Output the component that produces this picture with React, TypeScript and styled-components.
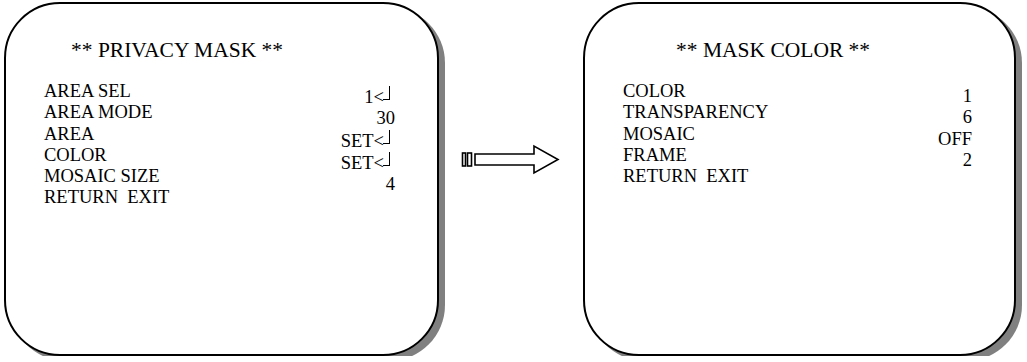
import styled, { createGlobalStyle } from 'styled-components';

const GlobalStyle = createGlobalStyle`
    body {
        margin: 0;
        background: #ffffff;
    }
`
const Page = styled.div`
    display: flex;
    align-items: flex-start;
    padding: 2px 0 0 4px;
    font-family: "Liberation Serif", "Times New Roman", serif;
    color: #000000;
`
const Screen = styled.div<{ $width: number; $titleLeft: number }>`
    width: ${p => p.$width}px;
    height: 354px;
    box-sizing: border-box;
    border: 2px solid #000000;
    border-radius: 56px;
    box-shadow: 6px 5px 0 #808080;
    background: #ffffff;
    padding: 34px 42px 0 38px;

    h2 {
        margin: 0 0 19px ${p => p.$titleLeft}px;
        font-size: 21.5px;
        line-height: 24px;
        font-weight: normal;
    }
`
const Menu = styled.div`
    display: flex;
    justify-content: space-between;
    font-size: 18.5px;
    line-height: 21.3px;
`
const Labels = styled.div`
    display: flex;
    flex-direction: column;
    white-space: pre;
`
const Values = styled.div`
    display: flex;
    flex-direction: column;
    align-items: flex-end;
    padding-top: 5px;
`
const Enter = styled.span`
    display: inline-block;
    margin-right: 5px;

    i {
        display: inline-block;
        width: 7px;
        height: 14px;
        margin-left: -1px;
        border-right: 1.5px solid #000000;
        border-bottom: 1.5px solid #000000;
        box-sizing: border-box;
        vertical-align: 3px;
    }
`
const Arrow = styled.svg`
    flex: none;
    margin: 141px 23px 0 21px;
`

type Item = { label: string; value: string; enter?: boolean };

const privacy: Item[] = [
    { label: 'AREA SEL', value: '1', enter: true },
    { label: 'AREA MODE', value: '30' },
    { label: 'AREA', value: 'SET', enter: true },
    { label: 'COLOR', value: 'SET', enter: true },
    { label: 'MOSAIC SIZE', value: '4' },
    { label: 'RETURN  EXIT', value: '' },
];

const maskColor: Item[] = [
    { label: 'COLOR', value: '1' },
    { label: 'TRANSPARENCY', value: '6' },
    { label: 'MOSAIC', value: 'OFF' },
    { label: 'FRAME', value: '2' },
    { label: 'RETURN  EXIT', value: '' },
];

function MenuScreen({ title, items, width, titleLeft }: { title: string; items: Item[]; width: number; titleLeft: number }) {
    return (
        <Screen $width={width} $titleLeft={titleLeft}>
            <h2>{title}</h2>
            <Menu>
                <Labels>
                    {items.map(it => <span key={it.label}>{it.label}</span>)}
                </Labels>
                <Values>
                    {items.filter(it => it.value).map((it, i) => (
                        <span key={i}>
                            {it.enter ? <Enter>{it.value}&lt;<i /></Enter> : it.value}
                        </span>
                    ))}
                </Values>
            </Menu>
        </Screen>
    );
}

export default function App() {
    return (
        <Page>
            <GlobalStyle />
            <MenuScreen title="** PRIVACY MASK **" items={privacy} width={435} titleLeft={27} />
            <Arrow width="100" height="32" viewBox="0 0 100 32">
                <g fill="#ffffff" stroke="#000000" strokeWidth="1.6">
                    <rect x="2.5" y="10" width="3" height="13" />
                    <rect x="7.5" y="10" width="4" height="13" />
                    <polygon points="15,11 74,11 74,3 98,16.5 74,30 74,22 15,22" />
                </g>
            </Arrow>
            <MenuScreen title="** MASK COLOR **" items={maskColor} width={433} titleLeft={53} />
        </Page>
    );
}
